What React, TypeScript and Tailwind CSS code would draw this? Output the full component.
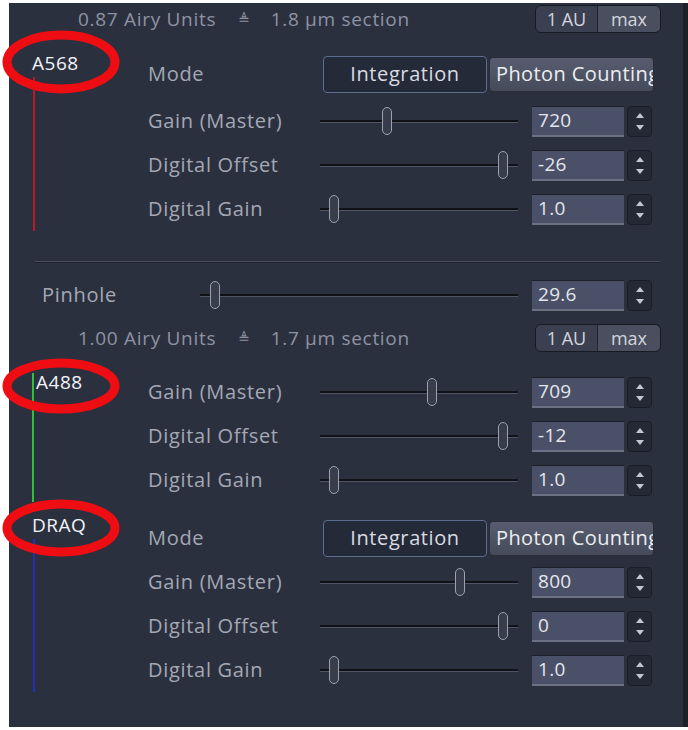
import React from 'react';

type Row = { label: string; value: string; thumb: number };

function Spinner() {
  return (
    <div className="ml-[3px] w-[25px] h-[31px] rounded-[4px] bg-[#252935] border border-[#1a1d26] flex flex-col items-center justify-center gap-[7px]">
      <svg width="8" height="5" viewBox="0 0 8 5">
        <path d="M4 0 L8 5 L0 5 Z" fill="#c4c8d2" />
      </svg>
      <svg width="8" height="5" viewBox="0 0 8 5">
        <path d="M0 0 L8 0 L4 5 Z" fill="#c4c8d2" />
      </svg>
    </div>
  );
}

function ValueBox({ value }: { value: string }) {
  return (
    <div className="flex items-center">
      <div className="w-[92px] h-[31px] bg-[#4a5067] border-t border-t-[#1c1f28] border-b-2 border-b-[#6b7182] flex items-center pl-[6px] text-[19px] text-[#e4e6ec] tracking-[0.3px]">
        {value}
      </div>
      <Spinner />
    </div>
  );
}

function Slider({ width, thumb }: { width: number; thumb: number }) {
  return (
    <div className="relative h-[32px] flex items-center" style={{ width }}>
      <div className="w-full h-[3px] bg-[#101217] border-b border-b-[#4f5567]" />
      <div
        className="absolute top-[2px] w-[10px] h-[28px] rounded-full border border-[#9ca1ae] bg-[#383d4c]"
        style={{ left: thumb - 5 }}
      />
    </div>
  );
}

function ControlRow({ label, value, thumb }: Row) {
  // slider starts at x=320 on the page
  return (
    <div className="flex items-center h-[44px]">
      <div className="w-[172px] text-[20px] text-[#a4a8b4] tracking-[0.7px]">{label}</div>
      <Slider width={198} thumb={thumb - 320} />
      <div className="ml-[14px]">
        <ValueBox value={value} />
      </div>
    </div>
  );
}

function ModeRow({ h }: { h: string }) {
  return (
    <div className={`flex items-center ${h}`}>
      <div className="w-[175px] text-[20px] text-[#a4a8b4] tracking-[0.7px]">Mode</div>
      <div className="w-[164px] h-[37px] rounded-[4px] border border-[#5d6d8e] bg-[#252a38] flex items-center justify-center text-[20px] text-[#d8dbe2] tracking-[0.6px]">
        Integration
      </div>
      <div className="ml-[2px] w-[165px] h-[35px] rounded-[4px] bg-gradient-to-b from-[#575d6e] to-[#464b5b] border border-[#2a2e3a] flex items-center pl-[6px] overflow-hidden whitespace-nowrap text-[20px] text-[#eceef2] tracking-[0.4px]">
        Photon Counting
      </div>
    </div>
  );
}

function AiryRow({ units, section }: { units: string; section: string }) {
  return (
    <div className="flex items-center h-[32px]">
      <div className="pl-[69px] flex items-center text-[19px] text-[#8e93a2] tracking-[0.7px]">
        <span>{units} Airy Units</span>
        <span className="ml-[22px] mr-[20px] text-[14px] font-['DejaVu_Sans',sans-serif]">≜</span>
        <span>{section} µm section</span>
      </div>
      <div className="ml-auto mr-[22px] flex h-[28px] rounded-[6px] border border-[#171a22] overflow-hidden text-[18px] text-[#d2d5dc]">
        <div className="w-[62px] bg-[#3b4051] flex items-center justify-center border-r border-[#22252f]">1 AU</div>
        <div className="w-[62px] bg-[#4a4f60] flex items-center justify-center">max</div>
      </div>
    </div>
  );
}

function Channel({
  name,
  color,
  labelTop,
  beside,
  children,
}: {
  name: string;
  color: string;
  labelTop: string;
  beside?: boolean;
  children: React.ReactNode;
}) {
  return (
    <div className="flex">
      <div className="w-[139px] pl-[23px] flex flex-col">
        {beside ? (
          <div className="flex flex-1">
            <div className="w-[2px] mt-[3px]" style={{ background: color }} />
            <div className={`${labelTop} pl-[2px] h-[24px] leading-[24px] text-[19px] text-[#f2f3f6] tracking-[0.5px]`}>
              {name}
            </div>
          </div>
        ) : (
          <>
            <div className={`${labelTop} h-[24px] leading-[24px] text-[19px] text-[#f2f3f6] tracking-[0.5px]`}>
              {name}
            </div>
            <div className="w-[2px] flex-1 mt-[2px] ml-[1px]" style={{ background: color }} />
          </>
        )}
      </div>
      <div className="flex flex-col">{children}</div>
    </div>
  );
}

const a568: Row[] = [
  { label: 'Gain (Master)', value: '720', thumb: 387 },
  { label: 'Digital Offset', value: '-26', thumb: 503 },
  { label: 'Digital Gain', value: '1.0', thumb: 334 },
];

const a488: Row[] = [
  { label: 'Gain (Master)', value: '709', thumb: 432 },
  { label: 'Digital Offset', value: '-12', thumb: 503 },
  { label: 'Digital Gain', value: '1.0', thumb: 334 },
];

const draq: Row[] = [
  { label: 'Gain (Master)', value: '800', thumb: 460 },
  { label: 'Digital Offset', value: '0', thumb: 503 },
  { label: 'Digital Gain', value: '1.0', thumb: 334 },
];

export default function App() {
  return (
    <div className="relative w-[688px] h-[730px] bg-white overflow-hidden font-['Open_Sans','Noto_Sans',sans-serif]">
      <div className="ml-[9px] mt-[3px] w-[679px] h-[724px] bg-[#2b303f] border-r-[5px] border-r-[#1d2029] flex flex-col">
        <AiryRow units="0.87" section="1.8" />

        <div className="mt-[14px]">
          <Channel name="A568" color="#b81a28" labelTop="mt-[2px]">
            <ModeRow h="h-[50px]" />
            {a568.map((r) => (
              <ControlRow key={r.label} {...r} />
            ))}
          </Channel>
        </div>

        <div className="mt-[30px] ml-[26px] mr-[23px] h-[2px] border-t border-t-[#474d5e] border-b border-b-[#20232c]" />

        <div className="mt-[10px] flex items-center h-[44px] pl-[33px]">
          <div className="w-[158px] text-[20px] text-[#a4a8b4] tracking-[0.7px]">Pinhole</div>
          <Slider width={318} thumb={15} />
          <div className="ml-[14px]">
            <ValueBox value="29.6" />
          </div>
        </div>

        <div className="mt-[5px]">
          <AiryRow units="1.00" section="1.7" />
        </div>

        <div className="mt-[16px]">
          <Channel name="A488" color="#2fbf3a" labelTop="mt-0" beside>
            {a488.map((r) => (
              <ControlRow key={r.label} {...r} />
            ))}
          </Channel>
        </div>

        <div className="mt-[14px]">
          <Channel name="DRAQ" color="#2530b8" labelTop="-mt-[3px]">
            <ModeRow h="h-[44px]" />
            {draq.map((r) => (
              <ControlRow key={r.label} {...r} />
            ))}
          </Channel>
        </div>
      </div>

      {/* red annotation circles drawn over the screenshot */}
      <svg className="absolute inset-0 pointer-events-none" width="688" height="730">
        <ellipse cx="61" cy="62" rx="54" ry="27" fill="none" stroke="#ee0d12" strokeWidth="9" />
        <ellipse cx="61" cy="386" rx="54" ry="23" fill="none" stroke="#ee0d12" strokeWidth="9" />
        <ellipse cx="61" cy="528" rx="54" ry="24" fill="none" stroke="#ee0d12" strokeWidth="9" />
      </svg>
    </div>
  );
}
